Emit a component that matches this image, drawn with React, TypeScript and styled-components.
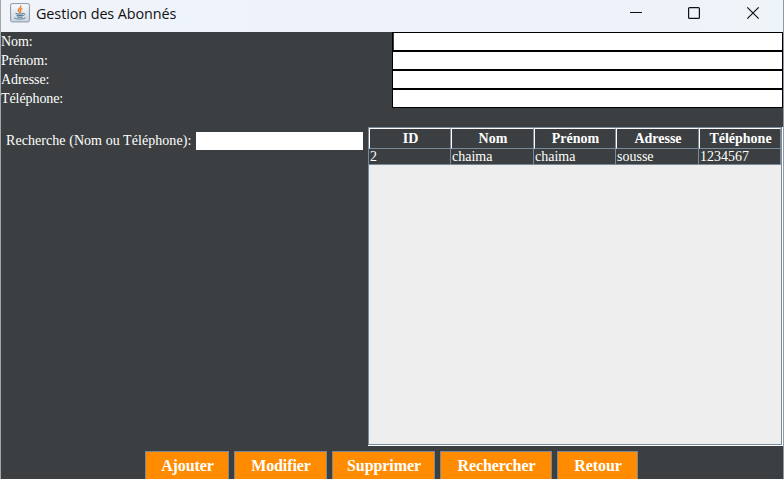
import React from "react";
import styled, { createGlobalStyle } from "styled-components";

const dark = "#3c3f41";
const steel = "#7a8a99";

const GlobalStyle = createGlobalStyle`
  * { box-sizing: border-box; }
  html, body { margin: 0; padding: 0; overflow: hidden; }
`;

const Window = styled.main`
  width: 784px;
  height: 479px;
  display: flex;
  flex-direction: column;
  overflow: hidden;
  background: ${dark};
  border-left: 1px solid #a3a5a8;
  border-right: 1px solid #8e99a3;
  color: #fff;
  font: 14px/19px "Liberation Serif", "Times New Roman", serif;
`;

const TitleBar = styled.header`
  height: 32px;
  flex: none;
  display: flex;
  align-items: flex-start;
  padding-left: 9px;
  background: linear-gradient(90deg, #f0f4f9, #eef2fb 35%, #eef2fb 75%, #eef4f7);
  color: #111;
`;

const JavaIcon = styled.svg`
  display: block;
  margin-top: 3px;
  width: 20px;
  height: 20px;
`;

const Title = styled.h1`
  flex: 1;
  margin: 4px 0 0 6px;
  font: 400 14.4px/20px "Open Sans", "Noto Sans", sans-serif;
  letter-spacing: -0.09px;
  white-space: nowrap;
`;

const WindowButtons = styled.svg`
  display: block;
  width: 160px;
  height: 32px;
`;

const Form = styled.section`
  flex: none;
  display: grid;
  grid-template-columns: 391px 391px;
  grid-auto-rows: 19px;
`;

const Label = styled.label`
  line-height: 20px;
  letter-spacing: -0.08px;
  white-space: nowrap;
`;

const Field = styled.input<{ $first?: boolean }>`
  display: block;
  width: 100%;
  height: 19px;
  padding: 0 2px;
  border: 1px solid #000;
  box-shadow: ${(p) => (p.$first ? `inset 1px 0 ${dark}` : "none")};
  border-radius: 0;
  outline: 0;
  background: #fff;
  font: inherit;
`;

const Content = styled.section`
  flex: none;
  height: 319px;
  margin-top: 19px;
  display: flex;
`;

const Search = styled.div`
  width: 367px;
  padding: 5px 5px 0;
  display: flex;
  align-items: flex-start;
  gap: 5px;
`;

const SearchLabel = styled.label`
  width: 185px;
  height: 18px;
  line-height: 18px;
  letter-spacing: 0.06px;
  white-space: nowrap;
`;

const SearchInput = styled.input`
  width: 167px;
  height: 18px;
  padding: 0;
  border: 0;
  border-radius: 0;
  background: #fff;
  font: inherit;
`;

const Viewport = styled.div`
  flex: 1;
  border-right: 1px solid #fff;
  border-bottom: 1px solid #fff;
`;

const Pane = styled.div`
  height: 100%;
  border: 1px solid ${steel};
  background: #eee;
`;

const Row = styled.div`
  display: grid;
  grid-template-columns: 82px 83px 82px 83px 82px;
`;

const HeaderCell = styled.div`
  height: 21px;
  border: 1px solid #fff;
  border-right-color: ${steel};
  border-bottom-color: ${steel};
  background: ${dark};
  text-align: center;
  font-weight: 700;
  line-height: 20px;
  padding-left: 1px;
`;

const Cell = styled.div`
  height: 16px;
  padding-left: 1px;
  border-right: 1px solid ${steel};
  border-bottom: 1px solid ${steel};
  background: ${dark};
  line-height: 15px;
`;

const Actions = styled.footer`
  height: 28px;
  margin-top: 5px;
  padding-left: 144px;
  display: flex;
  gap: 5px;
`;

const ActionButton = styled.button<{ $width: number }>`
  width: ${(p) => p.$width}px;
  height: 31px;
  flex: none;
  padding: 0 0 1px 1px;
  border: 1px solid ${steel};
  border-radius: 0;
  background: #ff8c00;
  color: #fff;
  font: 700 16px/28px "Liberation Serif", "Times New Roman", serif;
  letter-spacing: -0.09px;
`;

const fields = ["Nom:", "Prénom:", "Adresse:", "Téléphone:"];
const columns = ["ID", "Nom", "Prénom", "Adresse", "Téléphone"];
const subscriber = ["2", "chaima", "chaima", "sousse", "1234567"];
const actions = [
  { label: "Ajouter", width: 84 },
  { label: "Modifier", width: 93 },
  { label: "Supprimer", width: 103 },
  { label: "Rechercher", width: 112 },
  { label: "Retour", width: 81 },
];

export default function App() {
  return (
    <>
      <GlobalStyle />
      <Window>
        <TitleBar>
          <JavaIcon viewBox="0 0 20 20" aria-hidden="true">
            <defs>
              <linearGradient id="tile" x2="0" y2="1">
                <stop stopColor="#fafcfd" />
                <stop offset="1" stopColor="#c9d5df" />
              </linearGradient>
            </defs>
            <rect x=".6" y=".6" width="18.8" height="18.3" rx="1.5" fill="url(#tile)" stroke="#8796a8" />
            <g fill="none" strokeLinecap="round">
              <path d="M10.8 3c.6 2-3 2.7-2.5 4.5.2.7 1 1 1 1.9M12 5.7c-2 .8-2 1.5-1.4 2.2.5.6.1 1.1-.3 1.6" stroke="#e88334" strokeWidth="1.4" />
              <path d="M6 10.4c1.8.6 5.3.6 7.2 0M7 12.2c1.5.5 4 .5 5.6 0M7.4 13.9c1.5.5 3.3.5 4.6 0" stroke="#55799a" strokeWidth="1.1" />
              <path d="M13.5 10.4c2-.3 1.8 1.5-.1 2.2M4.5 15.2c1.8 1.4 8.9 1.3 10.7-.2" stroke="#55799a" strokeWidth=".9" />
            </g>
          </JavaIcon>
          <Title>Gestion des Abonnés</Title>
          <WindowButtons viewBox="623 0 160 32" fill="none" stroke="#111">
            <path d="M630 12.5h12" />
            <rect x="688.6" y="7.6" width="10.8" height="10.8" rx="1" strokeWidth="1.2" />
            <path d="m747.3 7.3 11.4 11.4m0-11.4-11.4 11.4" strokeWidth="1.2" />
          </WindowButtons>
        </TitleBar>
        <Form>
          {fields.map((name, i) => (
            <React.Fragment key={name}>
              <Label htmlFor={`field-${i}`}>{name}</Label>
              <Field id={`field-${i}`} $first={i === 0} />
            </React.Fragment>
          ))}
        </Form>
        <Content>
          <Search>
            <SearchLabel htmlFor="search">Recherche (Nom ou Téléphone):</SearchLabel>
            <SearchInput id="search" />
          </Search>
          <Viewport>
            <Pane>
              <Row>
                {columns.map((c) => (
                  <HeaderCell key={c}>{c}</HeaderCell>
                ))}
              </Row>
              <Row>
                {subscriber.map((v, i) => (
                  <Cell key={i}>{v}</Cell>
                ))}
              </Row>
            </Pane>
          </Viewport>
        </Content>
        <Actions>
          {actions.map((a) => (
            <ActionButton key={a.label} $width={a.width}>
              {a.label}
            </ActionButton>
          ))}
        </Actions>
      </Window>
    </>
  );
}
